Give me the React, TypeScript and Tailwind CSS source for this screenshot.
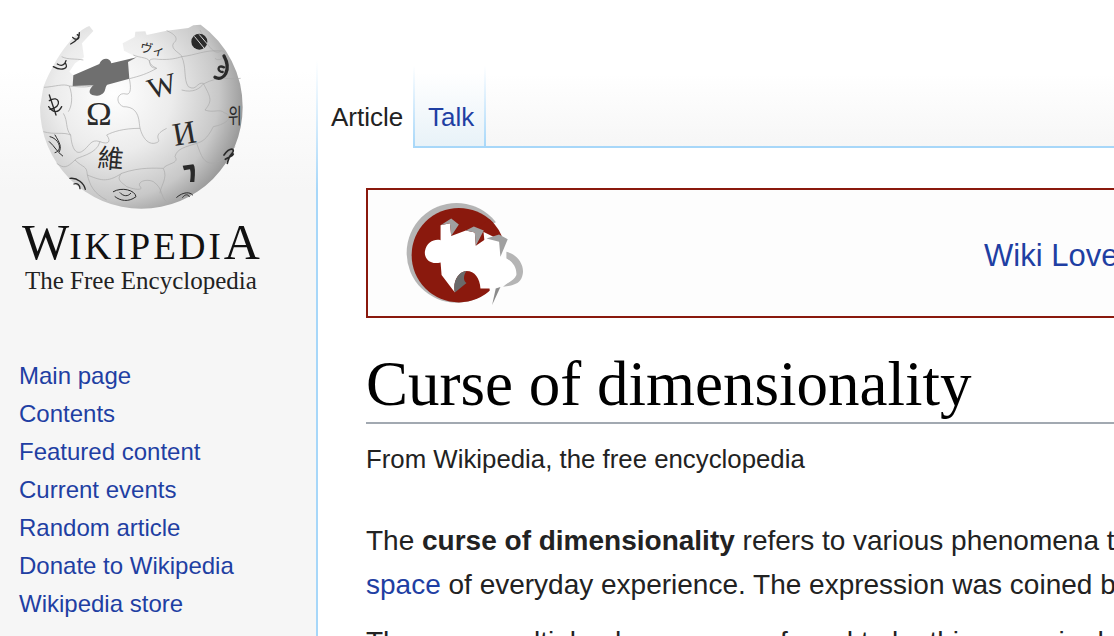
const navLinks = [
  'Main page',
  'Contents',
  'Featured content',
  'Current events',
  'Random article',
  'Donate to Wikipedia',
  'Wikipedia store',
];

const seams = [
  'M208 258 C250 262 262 262 280 256',
  'M388 236 C420 228 440 222 470 205 C440 190 440 172 475 178 C510 180 530 175 545 170 C590 165 610 150 665 152',
  'M500 92 C520 100 540 115 520 130 C510 150 545 160 545 170',
  'M400 165 C420 175 450 170 450 190 C450 205 470 205 470 205',
  'M545 170 C560 200 550 240 565 260 C590 275 590 245 610 250 C630 290 640 300 615 330',
  'M388 236 C395 270 390 285 378 282 C350 275 345 310 370 320 C400 320 415 335 418 370 C420 400 440 440 470 428 C490 420 450 410 500 385',
  'M545 270 C580 280 600 265 610 252 C660 225 690 240 722 235',
  'M615 330 C640 340 660 325 672 338 C700 345 690 370 640 380 C620 420 605 425 590 430 C560 440 530 445 525 470 C540 490 500 490 490 505',
  'M420 385 C370 385 340 395 320 405 C335 425 325 435 300 425 C270 415 270 440 245 455 C225 465 215 440 212 405 C190 395 165 405 130 395',
  'M205 335 C215 320 220 290 208 258',
  'M190 340 C205 365 195 385 212 405',
  'M225 480 C250 505 260 495 262 525 C300 540 320 550 365 520 C420 500 470 505 490 505 C505 535 480 560 480 580',
  'M365 520 C345 540 370 550 380 560 C420 575 430 565 420 560',
  'M590 430 C605 470 610 490 640 490 C670 480 680 470 705 440',
  'M420 560 C410 545 440 535 460 545 C490 565 480 590 500 605',
  'M208 258 C190 250 165 260 132 262',
  'M185 170 C205 180 225 175 250 180',
  'M600 90 C620 130 640 170 665 152 C690 160 660 190 645 175',
  'M300 425 C290 465 230 470 225 480 C200 505 190 505 170 490',
  'M262 525 C270 555 280 580 320 600',
];

function Globe() {
  const outline =
    'M120 322 A304 304 0 0 0 728 322 A304 304 0 0 0 602 74 L580 76 L565 84 L500 92 L440 105 L436 94 L406 95 L404 111 L368 130 L372 152 L410 172 L386 184 L320 196 L220 226 L208 215 L225 190 L252 172 L246 130 L280 93 L268 78 C230 90 170 160 130 262 Z';
  return (
    <svg viewBox="0 0 948 645" className="block w-[316px] h-[215px] shrink-0">
      <defs>
        <radialGradient id="sphere" gradientUnits="userSpaceOnUse" cx="340" cy="280" r="440">
          <stop offset="0" stopColor="#ffffff" />
          <stop offset="0.4" stopColor="#ececec" />
          <stop offset="0.72" stopColor="#c8c8c8" />
          <stop offset="1" stopColor="#808080" />
        </radialGradient>
      </defs>
      <path d={outline} fill="url(#sphere)" />
      <path
        d="M220 226 L298 192 C305 172 330 170 334 190 L410 172 L384 186 L388 236 L322 254 C312 262 322 282 292 287 C262 288 265 270 280 256 L218 258 Z"
        fill="#6f6f6f"
      />
      <g fill="none" stroke="#a9a9a9" strokeWidth="2">
        {seams.map((d) => (
          <path key={d} d={d} />
        ))}
      </g>
      <g fill="#2a2a2a" fontFamily="'Liberation Serif', serif">
        <text x="258" y="374" fontSize="104">Ω</text>
        <text x="0" y="0" fontSize="92" transform="translate(452 298) rotate(-16) scale(1 .95)">W</text>
        <text x="0" y="0" fontSize="98" transform="translate(524 438) rotate(-10) scale(.98 1)">И</text>
        <text x="294" y="504" fontSize="78" fontFamily="'Noto Sans CJK TC', sans-serif" transform="rotate(5 335 470)">維</text>
        <text x="420" y="160" fontSize="38" fontFamily="'Noto Sans CJK JP', sans-serif" transform="rotate(12 450 145)">ヴィ</text>
        <path d="M548 497 L580 493 Q588 500 583 546 L570 546 Q574 520 570 508 L552 511 Z" />
        <text x="0" y="0" fontSize="60" fontFamily="'Noto Sans CJK KR', sans-serif" transform="translate(684 368) scale(.75 1.05)">위</text>
        <ellipse cx="598" cy="125" rx="24" ry="24" />
      </g>
      <g fill="none" stroke="#2a2a2a" strokeLinecap="round">
        <path d="M584 110 L612 144 M598 104 L622 132" stroke="#d8d8d8" strokeWidth="3" />
        <path d="M645 232 C672 245 695 210 672 168" strokeWidth="10" />
        <path d="M672 202 C652 192 650 216 668 216" strokeWidth="7" />
        <path d="M148 285 L168 345 M148 302 C178 282 190 322 150 328 M146 320 C160 340 175 340 185 320" strokeWidth="4" />
        <path d="M150 410 C175 415 192 450 165 458 M148 425 C165 440 170 455 188 468 M165 405 C180 430 185 440 178 455" strokeWidth="3" />
        <path d="M160 200 C185 215 210 205 195 188 M172 192 C185 200 195 195 198 182" strokeWidth="4" />
        <path d="M212 132 C225 125 240 112 238 98 M218 112 C230 125 245 112 232 104" strokeWidth="4" />
        <path d="M340 575 C365 560 405 570 408 590 C385 608 360 602 345 590 M360 578 C370 590 385 590 392 580" strokeWidth="3" />
        <path d="M210 535 C232 532 252 550 256 568 M222 552 C232 548 240 556 240 566" strokeWidth="4" />
        <path d="M672 465 C690 440 708 445 696 460 C685 470 685 480 682 490 M676 478 C690 470 698 470 700 462" strokeWidth="5" />
        <path d="M530 592 C550 575 570 575 578 585 M548 592 C555 582 565 582 568 590" strokeWidth="3" />
      </g>
    </svg>
  );
}

function Emblem() {
  return (
    <svg viewBox="270 400 400 350" className="block w-[133px] h-[117px] shrink-0">
      <circle cx="440" cy="573" r="150" fill="#b5b5b5" />
      <circle cx="447" cy="580" r="142" fill="#8a190d" />
      <path d="M520 500 L680 420 L680 760 L530 760 L505 720 L540 687 Z" fill="#fdfdfd" />
      <path d="M582 540 A142 142 0 0 0 540 472 L500 500 Z" fill="#8a190d" />
      <path
        d="M590 570 C630 580 650 620 635 650 C625 670 600 672 580 675 L598 660 C620 640 620 605 590 590 Z"
        fill="#b5b5b5"
      />
      <path
        d="M392 490 L420 484 L424 522 L468 506 L495 512 L498 552 L530 530 L568 540 L572 585 C600 590 622 610 620 640 C610 665 570 672 550 680 L512 680 C510 650 495 628 470 628 C445 630 428 660 435 692 L395 640 L392 602 C360 610 342 590 345 568 C350 540 375 530 392 535 Z"
        fill="#ffffff"
      />
      <path
        d="M392 490 L424 470 L447 488 L424 522 L420 484 Z M468 506 L492 494 L522 506 L498 552 L495 512 Z M530 530 L568 518 L594 532 L572 585 L568 540 Z"
        fill="#a0a0a0"
      />
      <path d="M435 692 C428 660 445 630 470 628 C458 645 462 660 470 664 Z" fill="#6a6a6a" />
      <path d="M547 730 L558 680 L572 676 Z" fill="#8a8a8a" />
    </svg>
  );
}

export default function App() {
  return (
    <div className="flex w-[1114px] h-[636px] overflow-hidden bg-white font-['Liberation_Sans',Arial,sans-serif]">
      <aside className="w-[316px] shrink-0 flex flex-col bg-[linear-gradient(to_bottom,#ffffff_0,#ffffff_70px,#f6f6f6_190px)]">
        <Globe />
        <div className="ml-[22px] mt-[5px] h-[44px] leading-[44px] text-[#111] whitespace-nowrap font-['Liberation_Serif',serif]">
          <span className="text-[50px]">W</span>
          <span className="text-[37px] tracking-[3px]">IKIPEDI</span>
          <span className="text-[50px]">A</span>
        </div>
        <div className="ml-[25px] mt-[3px] h-[28px] leading-[28px] text-[25px] text-[#222] whitespace-nowrap font-['Liberation_Serif',serif]">
          The Free Encyclopedia
        </div>
        <ul className="mt-[62px] ml-[19px] flex flex-col">
          {navLinks.map((link) => (
            <li key={link} className="h-[38px] leading-[38px] text-[24px] text-[#1f3fa3] whitespace-nowrap">
              {link}
            </li>
          ))}
        </ul>
      </aside>
      <div className="w-[2px] shrink-0 bg-[linear-gradient(to_bottom,#ffffff_60px,#a7d7f9_190px)]" />
      <main className="flex-1 min-w-0">
        <div className="flex h-[148px] bg-[linear-gradient(to_bottom,#ffffff_50%,#f6f6f6_100%)]">
          <div className="w-[95px] pt-[99px] pl-[13px] bg-white text-[26px] leading-[36px] text-[#222]">Article</div>
          <div className="w-[73px] pt-[99px] pl-[13px] text-[26px] leading-[36px] text-[#1f3fa3] border-b-2 border-[#a7d7f9] bg-[linear-gradient(to_bottom,#ffffff_50%,#e8f2f8_100%)] border-l-2 border-r-2 [border-image:linear-gradient(to_bottom,#ffffff_45%,#a7d7f9_100%)_1]">
            Talk
          </div>
          <div className="flex-1 border-b-2 border-[#a7d7f9]" />
        </div>
        <div className="pl-[48px] w-[1600px] text-[#222]">
          <div className="mt-[40px] h-[130px] flex items-center pl-[32px] border-2 border-[#8a190d] bg-[#fdfdfd]">
            <Emblem />
            <span className="ml-[451px] mt-[6px] text-[31px] text-[#1f3fa3] whitespace-nowrap">Wiki Loves Earth</span>
          </div>
          <h1 className="mt-[30px] h-[76px] leading-[72px] text-[63px] text-black border-b-2 border-[#a2a9b1] font-['Liberation_Serif',serif] whitespace-nowrap">
            Curse of dimensionality
          </h1>
          <p className="mt-[15px] h-[40px] leading-[40px] text-[25.8px] whitespace-nowrap">From Wikipedia, the free encyclopedia</p>
          <p className="mt-[40px] text-[28px] leading-[44px] whitespace-nowrap">
            The <b>curse of dimensionality</b> refers to various phenomena that arise when analyzing and organizing data
            <br />
            <span className="text-[#1f3fa3]">space</span> of everyday experience. The expression was coined by Richard E. Bellman
          </p>
          <p className="mt-[13px] text-[28px] leading-[44px] whitespace-nowrap">
            There are multiple phenomena referred to by this name in domains such as numerical analysis
          </p>
        </div>
      </main>
    </div>
  );
}
